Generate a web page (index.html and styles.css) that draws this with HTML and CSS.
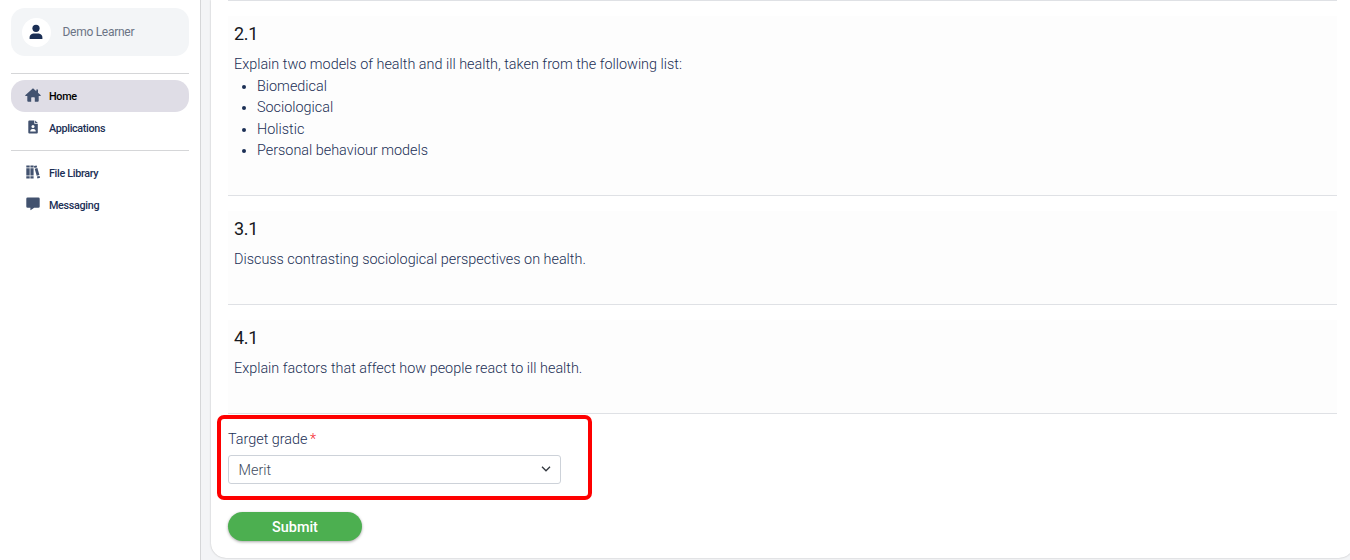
FILE: index.html
```
<!DOCTYPE html>
<html lang="en">
<head>
  <meta charset="UTF-8" />
  <meta name="viewport" content="width=device-width, initial-scale=1.0" />
  <title>Application</title>
  <link rel="stylesheet" href="styles.css">
</head>
<body>
  <aside class="sidebar">
    <div class="profile">
      <span class="avatar">
        <svg width="14" height="16" viewBox="0 0 14 16"><circle cx="7" cy="4.3" r="3.6"/><path d="M.6 15v-1.5C.6 10.700 3 9.400 5 9.400h4c2 0 4.400 1.300 4.400 4.100V15z"/></svg>
      </span>
      <span class="profile-name">Demo Learner</span>
    </div>
    <nav class="menu">
      <a class="menu-item active">
        <svg width="16" height="14" viewBox="0 0 16 14"><path d="M8 .3.500 7.100c-.5.500-.2 1 .3 1H2.300V12.800q0 .9.900.9H6.200V9.900q0-.6.600-.6h2.400q.6 0 .6.600v3.800h3q.9 0 .9-.9V8.100h1.500c.5 0 .8-.5.300-1L13 4.700V1.500h-1.700v1.700z"/></svg>
        <span>Home</span>
      </a>
      <a class="menu-item">
        <svg width="16" height="14" viewBox="0 0 16 14"><path d="M4.300.5H9.300V3.800h3.500v8.700q0 1-1 1H4.300q-1 0-1-1v-11q0-1 1-1z"/><path d="M10.100.5 12.800 3.100H10.100z"/><circle class="cut" cx="8" cy="6.600" r="1.500"/><path class="cut" d="M5.200 11.500c0-1.800.9-2.600 2-2.600h1.600c1.100 0 2 .8 2 2.600z"/></svg>
        <span>Applications</span>
      </a>
    </nav>
    <nav class="menu">
      <a class="menu-item">
        <svg width="16" height="14" viewBox="0 0 16 14"><path d="M1.300.5h3.400v1.900H1.300zM1.300 3.200h3.400v7.200H1.300zM1.300 11.200h3.400v2.300H1.300zM5.400.5h3.200v1.900H5.400zM5.400 3.200h3.200v7.200H5.400zM5.400 11.200h3.200v2.300H5.400zM8.900 1.100 11.600.4l.6 1.900-2.700.7zM9.700 3.800l2.700-.7 2 7-2.700.7zM11.900 11.600l2.700-.7.500 1.900-2.700.7z"/></svg>
        <span>File Library</span>
      </a>
      <a class="menu-item">
        <svg width="16" height="14" viewBox="0 0 16 14"><path d="M2.600.5h10.800q1.300 0 1.300 1.300v7.600q0 1.300-1.300 1.300H9.200L5.900 13.100q-.5.300-.5-.3v-2.100H2.600q-1.300 0-1.300-1.300V1.800Q1.300.5 2.600.5z"/></svg>
        <span>Messaging</span>
      </a>
    </nav>
  </aside>

  <main class="content">
    <form class="card">
      <section class="criterion">
        <div class="criterion-body">
          <h2>2.1</h2>
          <p>Explain two models of health and ill health, taken from the following list:</p>
          <ul>
            <li>Biomedical</li>
            <li>Sociological</li>
            <li>Holistic</li>
            <li>Personal behaviour models</li>
          </ul>
        </div>
      </section>
      <section class="criterion">
        <div class="criterion-body">
          <h2>3.1</h2>
          <p>Discuss contrasting sociological perspectives on health.</p>
        </div>
      </section>
      <section class="criterion">
        <div class="criterion-body">
          <h2>4.1</h2>
          <p>Explain factors that affect how people react to ill health.</p>
        </div>
      </section>

      <div class="grade">
        <div class="grade-box">
          <label for="grade">Target grade <span class="required">*</span></label>
          <div class="select-wrap">
            <select id="grade">
              <option>Merit</option>
            </select>
            <svg class="chevron" width="10" height="6" viewBox="0 0 10 6"><path d="M1 .8l4 4 4-4"/></svg>
          </div>
        </div>
      </div>

      <button type="button" class="submit">Submit</button>
    </form>
  </main>
</body>
</html>
```
FILE: styles.css
```
* {
  box-sizing: border-box;
}
body {
  display: flex;
  height: 560px;
  margin: 0;
  overflow: hidden;
  background-color: #f3f4f6;
  color: #1b2f55;
  font-family: Roboto, sans-serif;
  font-size: 14.4px;
  font-weight: 300;
  line-height: 21.6px;
}

/* sidebar */
.sidebar {
  flex: none;
  width: 201px;
  padding: 8px 11px 0;
  background-color: #fff;
  border-right: 1px solid #d5d6d8;
}
.profile {
  display: flex;
  align-items: center;
  height: 48px;
  margin-bottom: 17px;
  padding-left: 11px;
  background-color: #f3f5f7;
  border-radius: 14px;
}
.avatar {
  display: flex;
  align-items: center;
  justify-content: center;
  width: 29px;
  height: 29px;
  margin-right: 11.5px;
  background-color: #fff;
  border-radius: 50%;
}
.avatar svg {
  margin-right: 1px;
  fill: #1b2f55;
}
.profile-name {
  margin-top: 1px;
  color: #6b7485;
  font-size: 12px;
  font-weight: 400;
  letter-spacing: -0.28px;
}
.menu {
  padding: 6px 0;
  border-top: 1px solid #d5d6d8;
}
.menu-item {
  display: flex;
  align-items: center;
  gap: 8.5px;
  height: 32px;
  padding-left: 13.5px;
  border-radius: 14px;
  color: #1b2f55;
  font-size: 10.8px;
  font-weight: 500;
  letter-spacing: -0.33px;
}
.menu-item svg {
  margin-bottom: 3px;
  fill: #42526f;
}
.menu-item span {
  margin-top: 2px;
}
.menu-item .cut {
  fill: #fff;
}
.menu-item.active {
  background-color: #dfdde6;
  color: #000;
}

/* form */
.content {
  flex: none;
  width: 1153px;
  padding-left: 10px;
}
.card {
  height: 558px;
  padding: 0 17px;
  background-color: #fff;
  border-radius: 0 0 15px 15px;
  box-shadow: 0 0 2px rgba(0, 0, 0, 0.25);
}
.criterion {
  padding-top: 15px;
  border-top: 1px solid #dfe1e5;
}
.criterion-body {
  padding: 8px 6px 33.400px;
  background-color: #fdfdfd;
}
.criterion h2 {
  margin: 0 0 10px;
  color: #16181d;
  font-size: 18px;
  font-weight: 400;
  letter-spacing: -0.3px;
  line-height: 20px;
}
.criterion p {
  margin: 0;
}
.criterion ul {
  margin: 0;
  padding-left: 23px;
}
.grade {
  padding: 0.600px 0 12.400px;
  border-top: 1px solid #dfe1e5;
}
.grade-box {
  width: 375px;
  height: 85px;
  margin-left: -11px;
  padding: 10px 7px;
  border: 4px solid #fe0000;
  border-radius: 7px;
}
.grade-box label {
  display: block;
  margin-bottom: 4.900px;
}
.required {
  margin-left: -1px;
  color: #f5222d;
}
.select-wrap {
  display: flex;
  align-items: center;
  width: 333px;
}
.select-wrap select {
  width: 100%;
  height: 29px;
  padding: 1px 9.5px 0;
  appearance: none;
  background-color: #fff;
  border: 1px solid #cdd2d9;
  border-radius: 3px;
  color: #3e4a5d;
  font: inherit;
}
.chevron {
  flex: none;
  margin: 0 10px 1px -20px;
  fill: none;
  stroke: #32373f;
  stroke-width: 1.3;
  pointer-events: none;
}
.submit {
  display: block;
  width: 134px;
  height: 29px;
  padding: 1px 0 0;
  background-color: #4caf50;
  border: none;
  border-radius: 15px;
  box-shadow: 0 1px 3px rgba(0, 0, 0, 0.35);
  color: #fff;
  font-family: inherit;
  font-size: 14.4px;
  font-weight: 500;
}
```
